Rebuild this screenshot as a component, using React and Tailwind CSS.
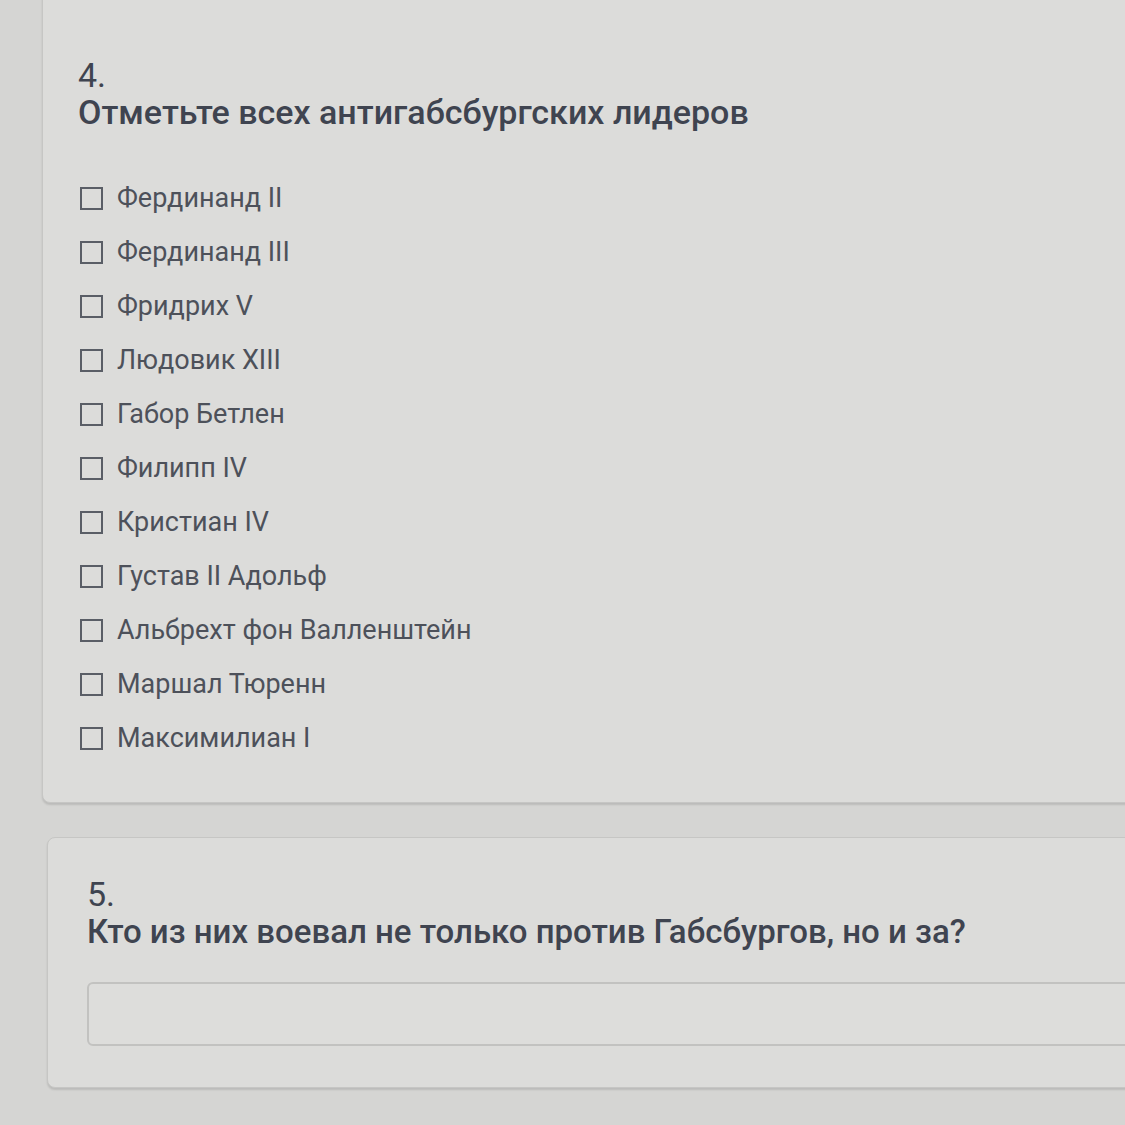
const options = [
  'Фердинанд II',
  'Фердинанд III',
  'Фридрих V',
  'Людовик XIII',
  'Габор Бетлен',
  'Филипп IV',
  'Кристиан IV',
  'Густав II Адольф',
  'Альбрехт фон Валленштейн',
  'Маршал Тюренн',
  'Максимилиан I',
];

export default function App() {
  return (
    <div
      className="w-[1125px] h-[1125px] overflow-hidden bg-[#d5d5d3]"
      style={{ fontFamily: 'Roboto, "Noto Sans", sans-serif' }}
    >
      {/* Question 4 card */}
      <div className="ml-[42px] -mt-[20px] w-[1140px] h-[823px] rounded-lg border border-[#c6c6c4] bg-[#dcdcda] shadow-[0_2px_2px_rgba(0,0,0,0.12)] pl-[35px] pt-[76px]">
        <div className="text-[34px] leading-[36px] text-[#3f4450]">4.</div>
        <div className="text-[34px] leading-[38px] font-medium text-[#3f4450]">
          Отметьте всех антигабсбургских лидеров
        </div>
        <div className="mt-[52px] flex flex-col gap-[24px]">
          {options.map((o) => (
            <label key={o} className="flex items-center gap-[14px] h-[30px] pl-[2px]">
              <span className="w-[23px] h-[23px] border-2 border-[#5a5e66] shrink-0" />
              <span className="text-[27px] leading-[30px] text-[#4d515a]">{o}</span>
            </label>
          ))}
        </div>
      </div>

      {/* Question 5 card */}
      <div className="mt-[34px] ml-[47px] w-[1140px] h-[251px] rounded-lg border border-[#c6c6c4] bg-[#dcdcda] shadow-[0_2px_2px_rgba(0,0,0,0.12)] pl-[39px] pt-[38px]">
        <div className="text-[34px] leading-[36px] text-[#3f4450]">5.</div>
        <div className="text-[33px] leading-[39px] font-medium text-[#3f4450]">
          Кто из них воевал не только против Габсбургов, но и за?
        </div>
        <div className="mt-[31px] h-[64px] w-[1100px] rounded-md border-2 border-[#c2c2c0] bg-[#dddddb]" />
      </div>
    </div>
  );
}
